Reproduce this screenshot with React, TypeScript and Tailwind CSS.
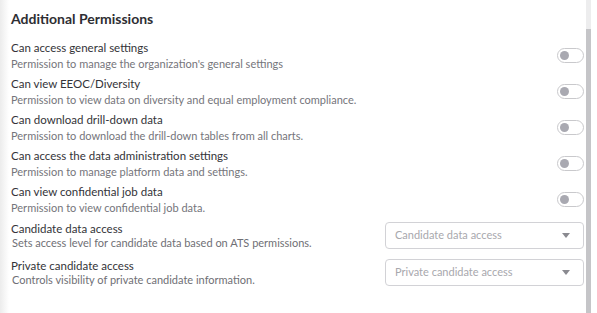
import React from "react";

const perms = [
  ["Can access general settings", "Permission to manage the organization's general settings"],
  ["Can view EEOC/Diversity", "Permission to view data on diversity and equal employment compliance."],
  ["Can download drill-down data", "Permission to download the drill-down tables from all charts."],
  ["Can access the data administration settings", "Permission to manage platform data and settings."],
  ["Can view confidential job data", "Permission to view confidential job data."],
];

const selects = [
  ["Candidate data access", "Sets access level for candidate data based on ATS permissions.", "Candidate data access"],
  ["Private candidate access", "Controls visibility of private candidate information.", "Private candidate access"],
];

function Toggle() {
  return (
    <div className="w-[27px] h-[15px] rounded-full border border-[#c9c9cc] bg-white flex items-center pl-[2px] shrink-0">
      <div className="w-[9px] h-[9px] rounded-full bg-[#a9a9b1]" />
    </div>
  );
}

function Select({ placeholder }: { placeholder: string }) {
  return (
    <div className="w-[199px] h-[27px] rounded-[4px] border border-[#d2d2d6] bg-white flex items-center justify-between pl-[9px] pr-[13px] shrink-0">
      <span className="text-[11px] text-[#a8a8ad]">{placeholder}</span>
      <svg width="8" height="5" viewBox="0 0 8 5">
        <path d="M0 0 L8 0 L4 5 Z" fill="#8a8a90" />
      </svg>
    </div>
  );
}

export default function App() {
  return (
    <div
      className="w-[597px] h-[313px] flex bg-white overflow-hidden"
      style={{ fontFamily: "Lato, 'Noto Sans', sans-serif" }}
    >
      <div className="flex-1 flex flex-col bg-[linear-gradient(to_right,#ececec,#ffffff_9px)] pl-[11px] pr-[2px] pt-[10px]">
        <h2 className="text-[14px] leading-[17px] font-bold text-[#2e2e33] mb-[13px]">Additional Permissions</h2>
        <div className="flex flex-col gap-[5px]">
          {perms.map(([label, desc]) => (
            <div key={label} className="flex items-center justify-between">
              <div className="flex flex-col">
                <span className="text-[11.5px] leading-[16px] text-[#333338]">{label}</span>
                <span className="text-[11px] leading-[15px] text-[#75757b]">{desc}</span>
              </div>
              <Toggle />
            </div>
          ))}
        </div>
        <div className="flex flex-col gap-[8px] mt-[6px]">
          {selects.map(([label, desc, ph]) => (
            <div key={label} className="flex items-center justify-between">
              <div className="flex flex-col">
                <span className="text-[11.5px] leading-[15px] text-[#333338]">{label}</span>
                <span className="text-[11px] leading-[14px] text-[#6f6f75] pl-[1px]">{desc}</span>
              </div>
              <Select placeholder={ph} />
            </div>
          ))}
        </div>
      </div>
      <div className="w-[5px] flex flex-col">
        <div className="h-[29px] bg-[#ededee]" />
        <div className="flex-1 bg-[#c5c5c8]" />
      </div>
      <div className="w-[6px]" />
    </div>
  );
}
